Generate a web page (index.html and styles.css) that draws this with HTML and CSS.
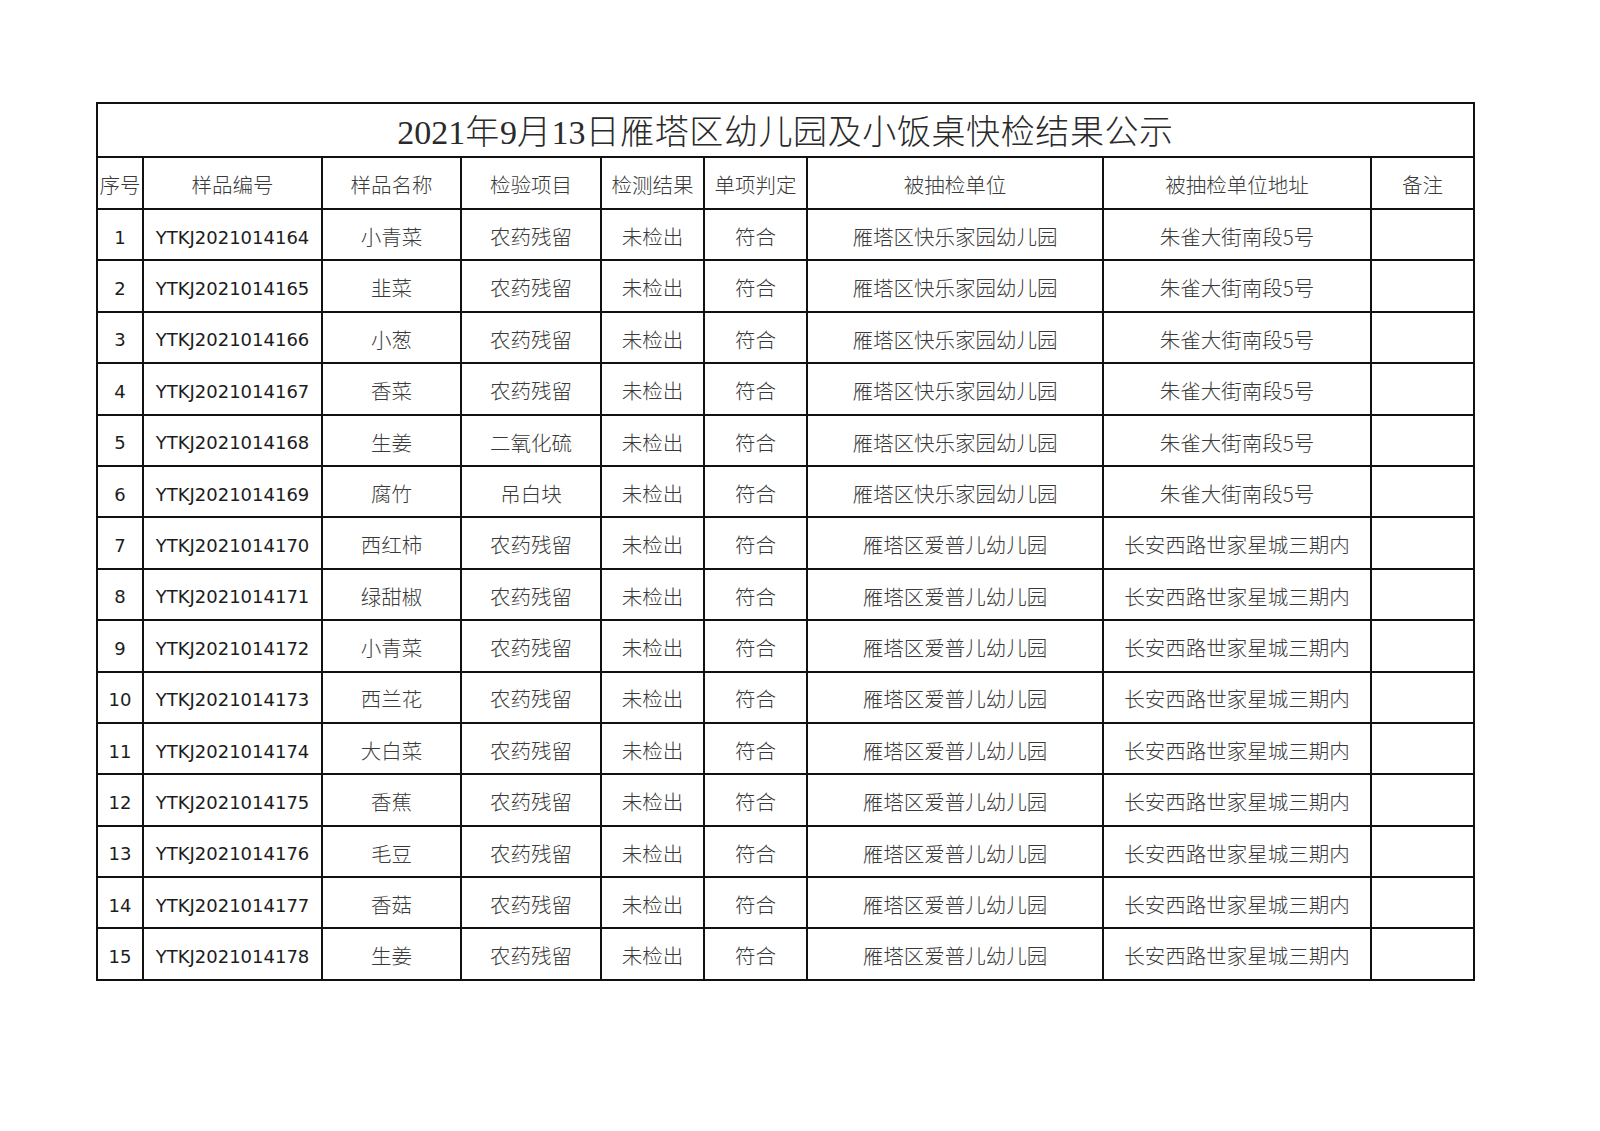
FILE: index.html
```html
<!DOCTYPE html>
<html lang="zh-CN">
<head>
<meta charset="utf-8">
<title>2021年9月13日雁塔区幼儿园及小饭桌快检结果公示</title>
<link rel="stylesheet" href="styles.css">
</head>
<body>
<div class="page">
  <div class="sheet">
    <div class="cell title"><span class="num">2021</span>年<span class="num">9</span>月<span class="num">13</span>日雁塔区幼儿园及小饭桌快检结果公示</div>

    <div class="cell head">序号</div>
    <div class="cell head">样品编号</div>
    <div class="cell head">样品名称</div>
    <div class="cell head">检验项目</div>
    <div class="cell head">检测结果</div>
    <div class="cell head">单项判定</div>
    <div class="cell head">被抽检单位</div>
    <div class="cell head">被抽检单位地址</div>
    <div class="cell head">备注</div>

    <div class="cell lat">1</div><div class="cell lat">YTKJ2021014164</div><div class="cell">小青菜</div><div class="cell">农药残留</div><div class="cell">未检出</div><div class="cell">符合</div><div class="cell">雁塔区快乐家园幼儿园</div><div class="cell">朱雀大街南段5号</div><div class="cell"></div>
    <div class="cell lat">2</div><div class="cell lat">YTKJ2021014165</div><div class="cell">韭菜</div><div class="cell">农药残留</div><div class="cell">未检出</div><div class="cell">符合</div><div class="cell">雁塔区快乐家园幼儿园</div><div class="cell">朱雀大街南段5号</div><div class="cell"></div>
    <div class="cell lat">3</div><div class="cell lat">YTKJ2021014166</div><div class="cell">小葱</div><div class="cell">农药残留</div><div class="cell">未检出</div><div class="cell">符合</div><div class="cell">雁塔区快乐家园幼儿园</div><div class="cell">朱雀大街南段5号</div><div class="cell"></div>
    <div class="cell lat">4</div><div class="cell lat">YTKJ2021014167</div><div class="cell">香菜</div><div class="cell">农药残留</div><div class="cell">未检出</div><div class="cell">符合</div><div class="cell">雁塔区快乐家园幼儿园</div><div class="cell">朱雀大街南段5号</div><div class="cell"></div>
    <div class="cell lat">5</div><div class="cell lat">YTKJ2021014168</div><div class="cell">生姜</div><div class="cell">二氧化硫</div><div class="cell">未检出</div><div class="cell">符合</div><div class="cell">雁塔区快乐家园幼儿园</div><div class="cell">朱雀大街南段5号</div><div class="cell"></div>
    <div class="cell lat">6</div><div class="cell lat">YTKJ2021014169</div><div class="cell">腐竹</div><div class="cell">吊白块</div><div class="cell">未检出</div><div class="cell">符合</div><div class="cell">雁塔区快乐家园幼儿园</div><div class="cell">朱雀大街南段5号</div><div class="cell"></div>
    <div class="cell lat">7</div><div class="cell lat">YTKJ2021014170</div><div class="cell">西红柿</div><div class="cell">农药残留</div><div class="cell">未检出</div><div class="cell">符合</div><div class="cell">雁塔区爱普儿幼儿园</div><div class="cell">长安西路世家星城三期内</div><div class="cell"></div>
    <div class="cell lat">8</div><div class="cell lat">YTKJ2021014171</div><div class="cell">绿甜椒</div><div class="cell">农药残留</div><div class="cell">未检出</div><div class="cell">符合</div><div class="cell">雁塔区爱普儿幼儿园</div><div class="cell">长安西路世家星城三期内</div><div class="cell"></div>
    <div class="cell lat">9</div><div class="cell lat">YTKJ2021014172</div><div class="cell">小青菜</div><div class="cell">农药残留</div><div class="cell">未检出</div><div class="cell">符合</div><div class="cell">雁塔区爱普儿幼儿园</div><div class="cell">长安西路世家星城三期内</div><div class="cell"></div>
    <div class="cell lat">10</div><div class="cell lat">YTKJ2021014173</div><div class="cell">西兰花</div><div class="cell">农药残留</div><div class="cell">未检出</div><div class="cell">符合</div><div class="cell">雁塔区爱普儿幼儿园</div><div class="cell">长安西路世家星城三期内</div><div class="cell"></div>
    <div class="cell lat">11</div><div class="cell lat">YTKJ2021014174</div><div class="cell">大白菜</div><div class="cell">农药残留</div><div class="cell">未检出</div><div class="cell">符合</div><div class="cell">雁塔区爱普儿幼儿园</div><div class="cell">长安西路世家星城三期内</div><div class="cell"></div>
    <div class="cell lat">12</div><div class="cell lat">YTKJ2021014175</div><div class="cell">香蕉</div><div class="cell">农药残留</div><div class="cell">未检出</div><div class="cell">符合</div><div class="cell">雁塔区爱普儿幼儿园</div><div class="cell">长安西路世家星城三期内</div><div class="cell"></div>
    <div class="cell lat">13</div><div class="cell lat">YTKJ2021014176</div><div class="cell">毛豆</div><div class="cell">农药残留</div><div class="cell">未检出</div><div class="cell">符合</div><div class="cell">雁塔区爱普儿幼儿园</div><div class="cell">长安西路世家星城三期内</div><div class="cell"></div>
    <div class="cell lat">14</div><div class="cell lat">YTKJ2021014177</div><div class="cell">香菇</div><div class="cell">农药残留</div><div class="cell">未检出</div><div class="cell">符合</div><div class="cell">雁塔区爱普儿幼儿园</div><div class="cell">长安西路世家星城三期内</div><div class="cell"></div>
    <div class="cell lat">15</div><div class="cell lat">YTKJ2021014178</div><div class="cell">生姜</div><div class="cell">农药残留</div><div class="cell">未检出</div><div class="cell">符合</div><div class="cell">雁塔区爱普儿幼儿园</div><div class="cell">长安西路世家星城三期内</div><div class="cell"></div>
  </div>
</div>
</body>
</html>
```

FILE: styles.css
```css
html, body {
  margin: 0;
  padding: 0;
  background: #ffffff;
}

.page {
  padding: 102px 0 0 96px;
}

.sheet {
  display: grid;
  width: 1379px;
  box-sizing: border-box;
  grid-template-columns: 46px 179px 139px 140px 103px 103px 296px 268px 103px;
  grid-template-rows: 54px 52px repeat(15, 51.4px);
  border-top: 2px solid #111;
  border-left: 2px solid #111;
  font-family: "Noto Sans CJK SC", "Liberation Serif", serif;
  font-size: 20.5px;
  color: #3a3a3a;
}

.cell {
  display: flex;
  align-items: center;
  justify-content: center;
  border-right: 2px solid #111;
  border-bottom: 2px solid #111;
  white-space: nowrap;
  overflow: hidden;
  line-height: 1;
  font-weight: 300;
  padding-top: 3px;
  box-sizing: border-box;
}

.title {
  grid-column: 1 / -1;
  font-family: "Liberation Serif", "Noto Sans CJK SC", serif;
  font-size: 34px;
  color: #2a2a2a;
  letter-spacing: 0.6px;
  padding-top: 5px;
  font-weight: 300;
}

.title .num {
  font-family: "Liberation Serif", serif;
  letter-spacing: 0;
}

.head {
  padding-top: 2px;
}

.lat {
  font-family: "DejaVu Sans", "Noto Sans CJK SC", sans-serif;
  font-size: 18px;
  font-weight: 400;
  color: #1c1c1c;
  padding-top: 6px;
}
```
